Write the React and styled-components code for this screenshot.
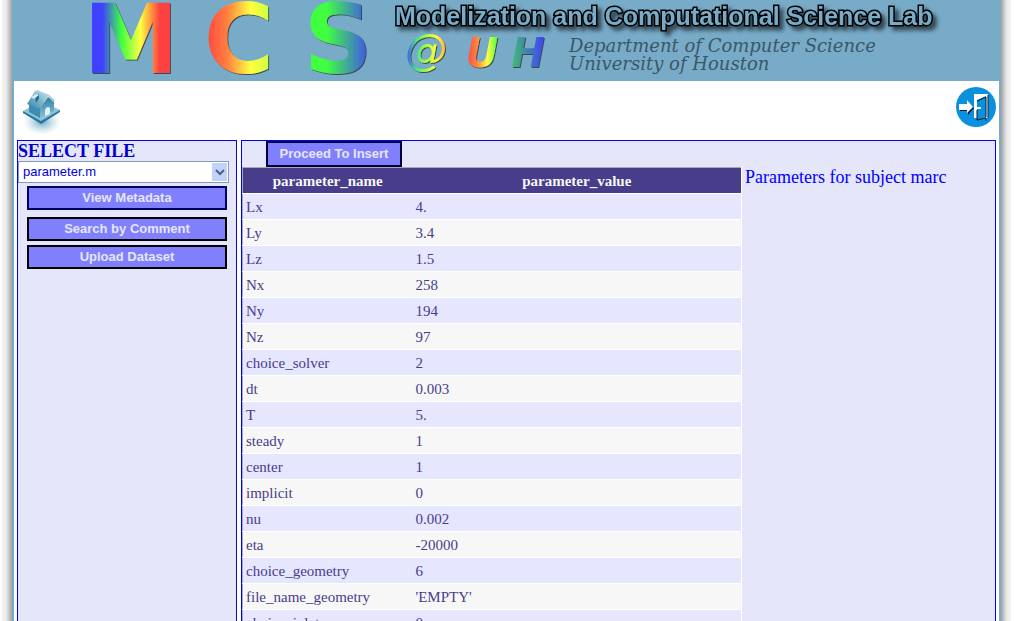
import React from "react";
import styled, { createGlobalStyle } from "styled-components";

const serif = '"Liberation Serif", "Times New Roman", serif';
const sans = '"Liberation Sans", Arial, sans-serif';

const Global = createGlobalStyle`
  * { box-sizing: border-box; }
  html { scrollbar-width: none; }
  body { margin: 0; background: #fff; font-family: ${serif}; }
`;

const Page = styled.div`
  display: flex;
  min-height: 100vh;
  padding: 0 3px 0 2px;
`;

const Edge = styled.div`
  flex: 0 0 10px;
  background: linear-gradient(
    to ${(p) => p.$to},
    #f4f4f4 0, #ececec 40%, #c8c8c8 70%, #a2a2a2 100%
  );
`;

const Sheet = styled.div`
  flex: 1;
  min-width: 0;
  display: flex;
  flex-direction: column;
  background: #fff;
  border: solid #78abc8;
  border-width: 0 2px;
`;

const Banner = styled.header`
  display: flex;
  height: 81px;
  padding-left: 65px;
  background: #78abc8;
`;

const Logo = styled.svg`
  flex: none;
  display: block;
  overflow: visible;
`;

const BannerText = styled.div`
  padding-top: 1px;
  white-space: nowrap;
`;

const BannerLine = styled.div`
  display: flex;
  align-items: flex-start;
  gap: 16px;
`;

const LabName = styled.h1`
  margin: 0;
  font: bold 25px/30px ${sans};
  color: #78abc8;
  -webkit-text-stroke: 3px #000;
  paint-order: stroke fill;
  filter: drop-shadow(4px 4px 2px rgba(0, 0, 0, 0.6));
`;

const Department = styled.p`
  margin: 6px 0 0;
  font: italic 18px/18px "DejaVu Serif", serif;
  color: #3b5768;
`;

const Toolbar = styled.nav`
  display: flex;
  justify-content: space-between;
  align-items: flex-start;
  height: 59px;
  padding: 5px 2px 0 8px;
`;

const IconLink = styled.a`
  display: block;
  height: 48px;
  svg { display: block; }
`;

const Columns = styled.div`
  flex: 1;
  display: flex;
  gap: 4px;
  padding: 0 3px;
`;

const Panel = styled.section`
  background: #e5e6fa;
  border: 1px solid #0000ff;
  border-bottom: 0;
`;

const FilePanel = styled(Panel)`
  flex: 0 0 220px;
`;

const DataPanel = styled(Panel)`
  flex: 1;
  min-width: 0;
`;

const FileLabel = styled.label`
  display: block;
  font: bold 18px/20px ${serif};
  color: #0000cd;
`;

const SelectWrap = styled.div`
  position: relative;
  width: 211px;
`;

const FileSelect = styled.select`
  display: block;
  appearance: none;
  width: 100%;
  height: 22px;
  padding: 0 20px 0 4px;
  border: 1px solid #7f9db9;
  border-radius: 0;
  background: #fff;
  font: 13px/20px ${sans};
  color: #0000e0;
`;

const SelectArrow = styled.svg`
  position: absolute;
  top: 2px;
  right: 2px;
  pointer-events: none;
`;

const Actions = styled.div`
  display: flex;
  flex-direction: column;
  padding: 3px 9px 0;
  gap: 4px;
`;

const Button = styled.button`
  height: 24px;
  padding: 0 10px;
  border: 2px solid ${(p) => p.$edge || "#000"};
  border-radius: 0;
  background: #8080ff;
  color: #e6e6fa;
  font: bold 13px/18px ${sans};
`;

const MetadataButton = styled(Button)`
  margin-bottom: 3px;
`;

const InsertButton = styled(Button)`
  height: 26px;
  min-width: 136px;
`;

const InsertBar = styled.div`
  display: flex;
  padding-left: 24px;
`;

const DataRow = styled.div`
  display: flex;
  align-items: flex-start;
`;

const Table = styled.table`
  width: 500px;
  table-layout: fixed;
  border-collapse: collapse;
  border-top: 1px solid #a9a9a9;
  border-left: 1px solid #a9a9a9;
  border-right: 1px solid #fff;
  color: #483d8b;
  font: 15px/19px ${serif};
`;

const HeadCell = styled.th`
  height: 26px;
  padding: 4px 3px 2px;
  width: ${(p) => p.$width};
  background: #483d8b;
  color: #f7f7f7;
  border-bottom: 1px solid #fff;
`;

const Row = styled.tr`
  height: 26px;
  background: #e6e6ff;
  border-bottom: 1px solid #fff;
  &:nth-child(even) { background: #f7f7f7; }
`;

const Cell = styled.td`
  padding: 4px 3px 2px;
`;

const Caption = styled.p`
  margin: 0;
  padding: 0 3px;
  font: 18px/21px ${serif};
  color: #0000ff;
`;

const rows = [
  ["Lx", "4."],
  ["Ly", "3.4"],
  ["Lz", "1.5"],
  ["Nx", "258"],
  ["Ny", "194"],
  ["Nz", "97"],
  ["choice_solver", "2"],
  ["dt", "0.003"],
  ["T", "5."],
  ["steady", "1"],
  ["center", "1"],
  ["implicit", "0"],
  ["nu", "0.002"],
  ["eta", "-20000"],
  ["choice_geometry", "6"],
  ["file_name_geometry", "'EMPTY'"],
  ["choice_inlet", "0"],
];

const blue = "#4040ff";
const green = "#40ff40";
const yellow = "#ffff40";
const red = "#ff4040";

function Rainbow({ id, colors }) {
  return (
    <linearGradient id={id}>
      {colors.map((color, i) => (
        <stop key={i} offset={i / (colors.length - 1)} stopColor={color} />
      ))}
    </linearGradient>
  );
}

function Bevel({ id }) {
  return (
    <filter id={id}>
      <feDropShadow dx="1" dy="1" stdDeviation="0" floodColor="#303030" floodOpacity="0.8" />
    </filter>
  );
}

function McsLogo() {
  return (
    <Logo width="316" height="81" viewBox="0 0 316 81" role="img" aria-label="MCS">
      <defs>
        <Rainbow id="m" colors={[blue, blue, green, yellow, red, red]} />
        <Rainbow id="c" colors={[red, "#ff8040", yellow, "#c0ff40"]} />
        <Rainbow id="s" colors={[green, green, "#40a0a0", blue]} />
        <Bevel id="bevel" />
      </defs>
      <g filter="url(#bevel)" fontFamily="DejaVu Sans, sans-serif" fontSize="96" fontWeight="bold" textAnchor="middle">
        <text x="52" y="73" fill="url(#m)">M</text>
        <text x="160" y="73" fill="url(#c)">C</text>
        <text x="259" y="73" fill="url(#s)">S</text>
      </g>
    </Logo>
  );
}

function UhLogo() {
  return (
    <Logo width="158" height="48" viewBox="0 0 158 48" role="img" aria-label="@UH">
      <defs>
        <Rainbow id="at" colors={[blue, "#40e090", "#a0ff40", yellow, "#ffa040"]} />
        <Rainbow id="u" colors={[red, "#ff8040", yellow, green]} />
        <Rainbow id="h" colors={["#40c070", "#4080b0", blue]} />
        <Bevel id="bevelSmall" />
      </defs>
      <g filter="url(#bevelSmall)" fontFamily="DejaVu Sans, sans-serif" fontStyle="italic" textAnchor="middle">
        <text x="31" y="34" fontSize="42" fill="url(#at)">@</text>
        <text x="87" y="36" fontSize="40" fontWeight="bold" fill="url(#u)">U</text>
        <text x="133" y="36" fontSize="40" fontWeight="bold" fill="url(#h)">H</text>
      </g>
    </Logo>
  );
}

function HomeIcon() {
  return (
    <svg width="40" height="48" viewBox="0 0 40 48" aria-hidden="true">
      <defs>
        <radialGradient id="glow">
          <stop offset="0" stopColor="#5c9fbe" stopOpacity="0.9" />
          <stop offset="1" stopColor="#a8d0e0" stopOpacity="0" />
        </radialGradient>
        <linearGradient id="roof" x1="0" y1="1" x2="1" y2="0">
          <stop offset="0" stopColor="#2f7fa6" />
          <stop offset="1" stopColor="#c9e4ef" />
        </linearGradient>
        <linearGradient id="wall" x1="0" y1="0" x2="0" y2="1">
          <stop offset="0" stopColor="#2f80a6" />
          <stop offset="1" stopColor="#8ac0d7" />
        </linearGradient>
      </defs>
      <ellipse cx="20" cy="36" rx="19" ry="13" fill="url(#glow)" />
      <path d="M1 25 19 15 38 24 19 36Z" fill="#8fc3da" />
      <path d="M1 25 19 35 38 24V26L19 38 1 27Z" fill="#26789f" />
      <path d="M7 15 18 22V32L7 26Z" fill="#3e8cb1" />
      <path d="M18 22 26 11 32 15V25L18 32Z" fill="url(#wall)" />
      <path d="M5 18 13 5 27 9 17 23Z" fill="url(#roof)" />
      <path d="M13 5 15 4 27 9 33 14 31 16 26 10Z" fill="#a5cfe1" />
      <path d="M13 10 17 8V13L14 17Z" fill="#216d94" />
      <path d="M9 11 14 8 17 9 12 13Z" fill="#d5ebf3" />
      <path d="M23 30V24Q25 19 28 22V28Z" fill="#e1f1f6" />
    </svg>
  );
}

function ExitIcon() {
  return (
    <svg width="42" height="42" viewBox="0 0 42 42" aria-hidden="true">
      <circle cx="21" cy="21" r="20" fill="#0a90dc" />
      <path d="M5 19H13V16L19 22 13 29V25H5Z" fill="#001c38" />
      <path d="M4 18H12V14L18 21 12 27V24H4Z" fill="#fff" />
      <path d="M19 8H33V32H19Z" fill="#fff" />
      <path d="M22 14 31 10V33L22 35Z" fill="#0a90dc" />
      <path d="M22 24V34L31 32V35M33 9V32M22 15 31 11V31" fill="none" stroke="#001c38" />
      <path d="M22 22H26" stroke="#fff" strokeWidth="2" />
    </svg>
  );
}

export default function App() {
  return (
    <>
      <Global />
      <Page>
        <Edge $to="right" />
        <Sheet>
          <Banner>
            <McsLogo />
            <BannerText>
              <LabName>Modelization and Computational Science Lab</LabName>
              <BannerLine>
                <UhLogo />
                <Department>
                  Department of Computer Science
                  <br />
                  University of Houston
                </Department>
              </BannerLine>
            </BannerText>
          </Banner>
          <Toolbar>
            <IconLink href="#home" aria-label="Home"><HomeIcon /></IconLink>
            <IconLink href="#logout" aria-label="Log out"><ExitIcon /></IconLink>
          </Toolbar>
          <Columns>
            <FilePanel>
              <FileLabel htmlFor="file">SELECT FILE</FileLabel>
              <SelectWrap>
                <FileSelect id="file" defaultValue="parameter.m">
                  <option>parameter.m</option>
                </FileSelect>
                <SelectArrow width="15" height="18" viewBox="0 0 15 18" aria-hidden="true">
                  <rect width="15" height="18" rx="1" fill="#c1d3fb" />
                  <path d="M4 7 8 11 12 7" fill="none" stroke="#4d6185" strokeWidth="2" />
                </SelectArrow>
              </SelectWrap>
              <Actions>
                <MetadataButton type="button" $edge="#000066">View Metadata</MetadataButton>
                <Button type="button">Search by Comment</Button>
                <Button type="button">Upload Dataset</Button>
              </Actions>
            </FilePanel>
            <DataPanel>
              <InsertBar>
                <InsertButton type="button" $edge="#000040">Proceed To Insert</InsertButton>
              </InsertBar>
              <DataRow>
                <Table>
                  <thead>
                    <tr>
                      <HeadCell $width="170px">parameter_name</HeadCell>
                      <HeadCell>parameter_value</HeadCell>
                    </tr>
                  </thead>
                  <tbody>
                    {rows.map(([name, value]) => (
                      <Row key={name}>
                        <Cell>{name}</Cell>
                        <Cell>{value}</Cell>
                      </Row>
                    ))}
                  </tbody>
                </Table>
                <Caption>Parameters for subject marc</Caption>
              </DataRow>
            </DataPanel>
          </Columns>
        </Sheet>
        <Edge $to="left" />
      </Page>
    </>
  );
}
